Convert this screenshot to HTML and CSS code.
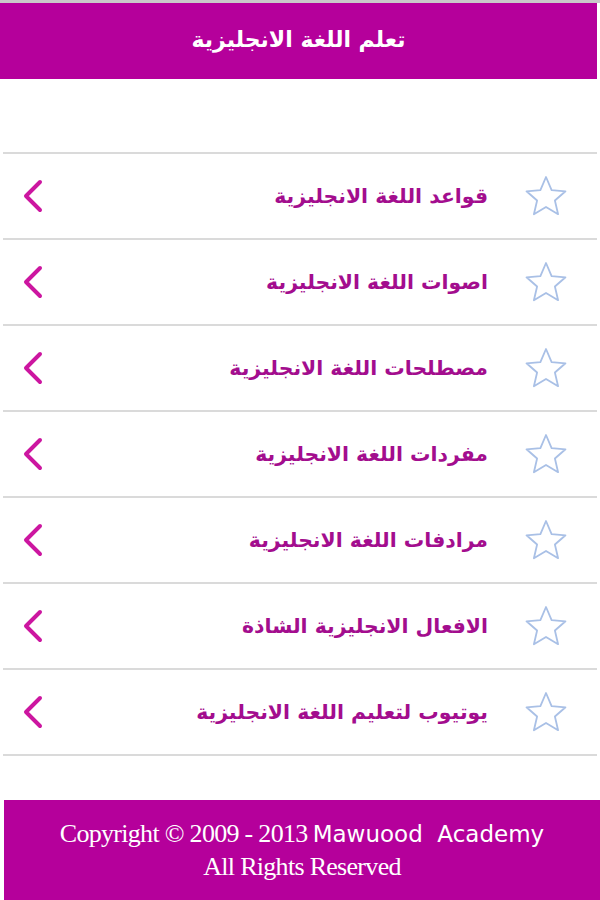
FILE: index.html
```html
<!DOCTYPE html>
<html lang="ar" dir="rtl">
<head>
<meta charset="utf-8" />
<title>تعلم اللغة الانجليزية</title>
<link rel="stylesheet" href="styles.css">
</head>
<body>
<div class="top_bar"></div>
<div class="header">تعلم اللغة الانجليزية</div>
<ul class="menu">
	<li><span class="star"><svg width="44" height="42" viewBox="0 0 44 42"><polygon points="22,2 27.6,15.2 41.5,16.3 30.9,25.5 34.1,39.2 22,31.9 9.9,39.2 13.1,25.5 2.5,16.3 16.4,15.2" /></svg></span><span class="title">قواعد اللغة الانجليزية</span><span class="arrow"><svg width="24" height="34" viewBox="0 0 24 34"><polyline points="19,3 5,17 19,31" /></svg></span></li>
	<li><span class="star"><svg width="44" height="42" viewBox="0 0 44 42"><polygon points="22,2 27.6,15.2 41.5,16.3 30.9,25.5 34.1,39.2 22,31.9 9.9,39.2 13.1,25.5 2.5,16.3 16.4,15.2" /></svg></span><span class="title">اصوات اللغة الانجليزية</span><span class="arrow"><svg width="24" height="34" viewBox="0 0 24 34"><polyline points="19,3 5,17 19,31" /></svg></span></li>
	<li><span class="star"><svg width="44" height="42" viewBox="0 0 44 42"><polygon points="22,2 27.6,15.2 41.5,16.3 30.9,25.5 34.1,39.2 22,31.9 9.9,39.2 13.1,25.5 2.5,16.3 16.4,15.2" /></svg></span><span class="title">مصطلحات اللغة الانجليزية</span><span class="arrow"><svg width="24" height="34" viewBox="0 0 24 34"><polyline points="19,3 5,17 19,31" /></svg></span></li>
	<li><span class="star"><svg width="44" height="42" viewBox="0 0 44 42"><polygon points="22,2 27.6,15.2 41.5,16.3 30.9,25.5 34.1,39.2 22,31.9 9.9,39.2 13.1,25.5 2.5,16.3 16.4,15.2" /></svg></span><span class="title">مفردات اللغة الانجليزية</span><span class="arrow"><svg width="24" height="34" viewBox="0 0 24 34"><polyline points="19,3 5,17 19,31" /></svg></span></li>
	<li><span class="star"><svg width="44" height="42" viewBox="0 0 44 42"><polygon points="22,2 27.6,15.2 41.5,16.3 30.9,25.5 34.1,39.2 22,31.9 9.9,39.2 13.1,25.5 2.5,16.3 16.4,15.2" /></svg></span><span class="title">مرادفات اللغة الانجليزية</span><span class="arrow"><svg width="24" height="34" viewBox="0 0 24 34"><polyline points="19,3 5,17 19,31" /></svg></span></li>
	<li><span class="star"><svg width="44" height="42" viewBox="0 0 44 42"><polygon points="22,2 27.6,15.2 41.5,16.3 30.9,25.5 34.1,39.2 22,31.9 9.9,39.2 13.1,25.5 2.5,16.3 16.4,15.2" /></svg></span><span class="title">الافعال الانجليزية الشاذة</span><span class="arrow"><svg width="24" height="34" viewBox="0 0 24 34"><polyline points="19,3 5,17 19,31" /></svg></span></li>
	<li><span class="star"><svg width="44" height="42" viewBox="0 0 44 42"><polygon points="22,2 27.6,15.2 41.5,16.3 30.9,25.5 34.1,39.2 22,31.9 9.9,39.2 13.1,25.5 2.5,16.3 16.4,15.2" /></svg></span><span class="title">يوتيوب لتعليم اللغة الانجليزية</span><span class="arrow"><svg width="24" height="34" viewBox="0 0 24 34"><polyline points="19,3 5,17 19,31" /></svg></span></li>
</ul>
<div class="footer" dir="ltr">
	<p><span class="serif">Copyright © 2009 - 2013</span> <span class="sans">Mawuood&nbsp; Academy</span></p>
	<p class="serif">All Rights Reserved</p>
</div>
</body>
</html>
```
FILE: styles.css
```css
html{background:#fff;}
body{margin:0;width:600px;font-family:"DejaVu Sans", sans-serif;}
.top_bar{height:3px;background:#c9c9c9;}
.header{height:76px;line-height:74px;margin-right:3px;background:#b5009b;color:#fff;text-align:center;font-size:22px;font-weight:bold;}
.menu{list-style:none;margin:73px 3px 0;padding:0;border-top:2px solid #dadada;}
.menu li{display:flex;align-items:center;height:84px;border-bottom:2px solid #dadada;}
.menu .star{width:44px;height:42px;margin:0 29px 0 0;}
.menu .star svg{display:block;}
.menu .star polygon{fill:#fff;stroke:#a9c0e6;stroke-width:1.8;stroke-linejoin:round;}
.menu .title{margin-right:36px;color:#a30d8e;font-size:20.4px;font-weight:bold;}
.menu .arrow{margin-right:auto;margin-left:18px;width:24px;height:34px;}
.menu .arrow svg{display:block;}
.menu .arrow polyline{fill:none;stroke:#cc16a0;stroke-width:4;stroke-linecap:round;stroke-linejoin:round;}
.footer{margin:44px 0 0 4px;height:102px;box-sizing:border-box;padding-top:19px;background:#b5009b;color:#fff;text-align:center;}
.footer p{margin:0;line-height:30px;}
.footer .serif{font-family:"Liberation Serif", serif;font-size:26px;letter-spacing:-0.7px;}
.footer .sans{font-family:"DejaVu Sans", sans-serif;font-size:23px;}
```
